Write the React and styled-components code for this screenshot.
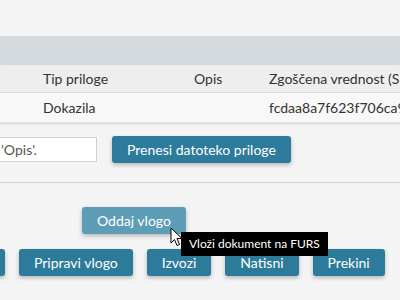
import React from "react"
import styled, { createGlobalStyle } from "styled-components"

const GlobalStyle = createGlobalStyle`
  body {
    margin: 0;
    background: #f4f4f4;
    font-family: Lato, "Open Sans", sans-serif;
    color: #333;
  }
`;

const App = () => {
  return (
    <Page>
      <GlobalStyle />
      <TopSpace />
      <Band />
      <Table>
        <HeaderRow>
          <Cell />
          <Cell>Tip priloge</Cell>
          <Cell>Opis</Cell>
          <Cell>Zgoščena vrednost (SHA-256)</Cell>
        </HeaderRow>
        <DataRow>
          <Cell />
          <Cell>Dokazila</Cell>
          <Cell />
          <Cell>fcdaa8a7f623f706ca9e1b0c</Cell>
        </DataRow>
      </Table>

      <UploadRow>
        <FakeInput>'Opis'.</FakeInput>
        <Button>Prenesi datoteko priloge</Button>
      </UploadRow>

      <Divider />

      <SubmitRow>
        <Button $faded>Oddaj vlogo</Button>
      </SubmitRow>

      <ActionRow>
        <Button $width="60px">Nazaj</Button>
        <Button>Pripravi vlogo</Button>
        <Button>Izvozi</Button>
        <Button>Natisni</Button>
        <Button>Prekini</Button>
      </ActionRow>

      <Cursor width="13" height="20" viewBox="0 0 13 20">
        <path d="M1 1 L1 16 L4.5 12.5 L7 18.5 L9.5 17.5 L7 11.5 L12 11.5 Z" fill="#fff" stroke="#000" strokeWidth="1" strokeLinejoin="round" />
      </Cursor>
      <Tooltip>Vloži dokument na FURS</Tooltip>
    </Page>
  )
}

const Page = styled.div`
  position: relative;
  width: 400px;
  height: 300px;
  overflow: hidden;
  background: #f4f4f4;
`;
const TopSpace = styled.div`
  height: 36px;
`;
const Band = styled.div`
  height: 29px;
  background: #d4dadd;
`;
const Table = styled.div`
  box-shadow: 0 1px 2px rgba(0, 0, 0, 0.12);
`;
const Row = styled.div`
  display: grid;
  grid-template-columns: 35px 151px 75px 1fr;
  align-items: center;
  font-size: 14px;
  white-space: nowrap;
  overflow: hidden;
`;
const HeaderRow = styled(Row)`
  height: 27px;
  background: #eeeeee;
  border-bottom: 1px solid #dcdcdc;
`;
const DataRow = styled(Row)`
  height: 29px;
  background: #f8f8f8;
  border-bottom: 1px solid #e2e2e2;
`;
const Cell = styled.div`
  padding-left: 8px;
  overflow: hidden;
`;
const UploadRow = styled.div`
  display: flex;
  align-items: center;
  gap: 15px;
  margin-top: 13px;
`;
const FakeInput = styled.div`
  box-sizing: border-box;
  width: 100px;
  height: 25px;
  margin-left: -3px;
  padding-left: 3px;
  background: #fff;
  border: 1px solid #d0d0d0;
  font-size: 14px;
  line-height: 23px;
  color: #555;
`;
const Button = styled.button`
  box-sizing: border-box;
  flex: none;
  height: 27px;
  width: ${p => p.$width || "auto"};
  padding: 0 15px;
  border: none;
  border-radius: 3px;
  background: ${p => (p.$faded ? "#5e9db6" : "#2c7b9b")};
  color: #fff;
  font-family: Lato, "Open Sans", sans-serif;
  font-size: 14px;
  box-shadow: 0 2px 4px rgba(0, 0, 0, 0.25);
  cursor: pointer;
`;
const Divider = styled.div`
  height: 1px;
  margin-top: 19px;
  background: #cfd3d4;
`;
const SubmitRow = styled.div`
  display: flex;
  padding-left: 82px;
  margin-top: 24px;
`;
const ActionRow = styled.div`
  display: flex;
  gap: 14px;
  margin-top: 15px;
  margin-left: -55px;
`;
const Cursor = styled.svg`
  position: absolute;
  left: 170px;
  top: 227px;
`;
const Tooltip = styled.div`
  position: absolute;
  left: 181px;
  top: 232px;
  height: 24px;
  padding: 0 8px;
  background: #000;
  color: #fff;
  font-size: 12px;
  line-height: 24px;
  white-space: nowrap;
`;

export default App;
